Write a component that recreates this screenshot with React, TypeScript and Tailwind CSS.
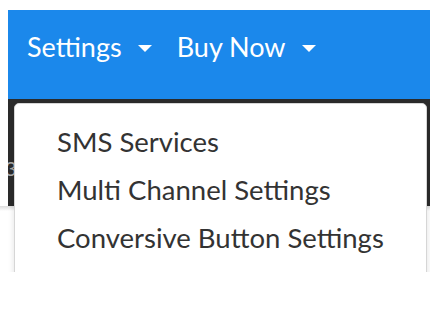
import React from "react";

function Caret() {
  return (
    <span className="mt-[3px] ml-[16px] inline-block h-0 w-0 border-t-[7px] border-x-[7px] border-x-transparent border-t-white" />
  );
}

export default function App() {
  const items = ["SMS Services", "Multi Channel Settings", "Conversive Button Settings"];
  return (
    <div className="w-[430px] h-[316px] bg-white font-['Lato','Noto_Sans',sans-serif]">
      <div className="relative h-[272px] overflow-hidden pt-[10px]">
        <nav className="ml-[8px] h-[89px] bg-[#1b88eb] pt-[17px] pl-[19px] flex items-start">
          <div className="flex items-center">
            <span className="text-[27px] leading-[40px] text-white">Settings</span>
            <Caret />
          </div>
          <div className="ml-[25px] flex items-center">
            <span className="text-[27px] leading-[40px] text-white">Buy Now</span>
            <Caret />
          </div>
        </nav>
        <div className="ml-[8px] h-[107px] bg-[#2b2b2b] overflow-hidden">
          <div className="pt-[57px] text-[20px] leading-[24px] text-[#aaaaaa] -ml-[3px]">3·</div>
        </div>
        <div className="h-[5px] bg-gradient-to-b from-[#dcdcdc] to-white" />
        <div className="absolute left-[14px] top-[103px] w-[413px] h-[200px] rounded-t-[5px] border border-[#d6d6d6] bg-white pt-[14px] shadow-[0_2px_6px_rgba(0,0,0,0.12)]">
          {items.map((t) => (
            <div key={t} className="pl-[42px] text-[27.5px] leading-[48px] text-[#333333]">
              {t}
            </div>
          ))}
        </div>
      </div>
    </div>
  );
}
